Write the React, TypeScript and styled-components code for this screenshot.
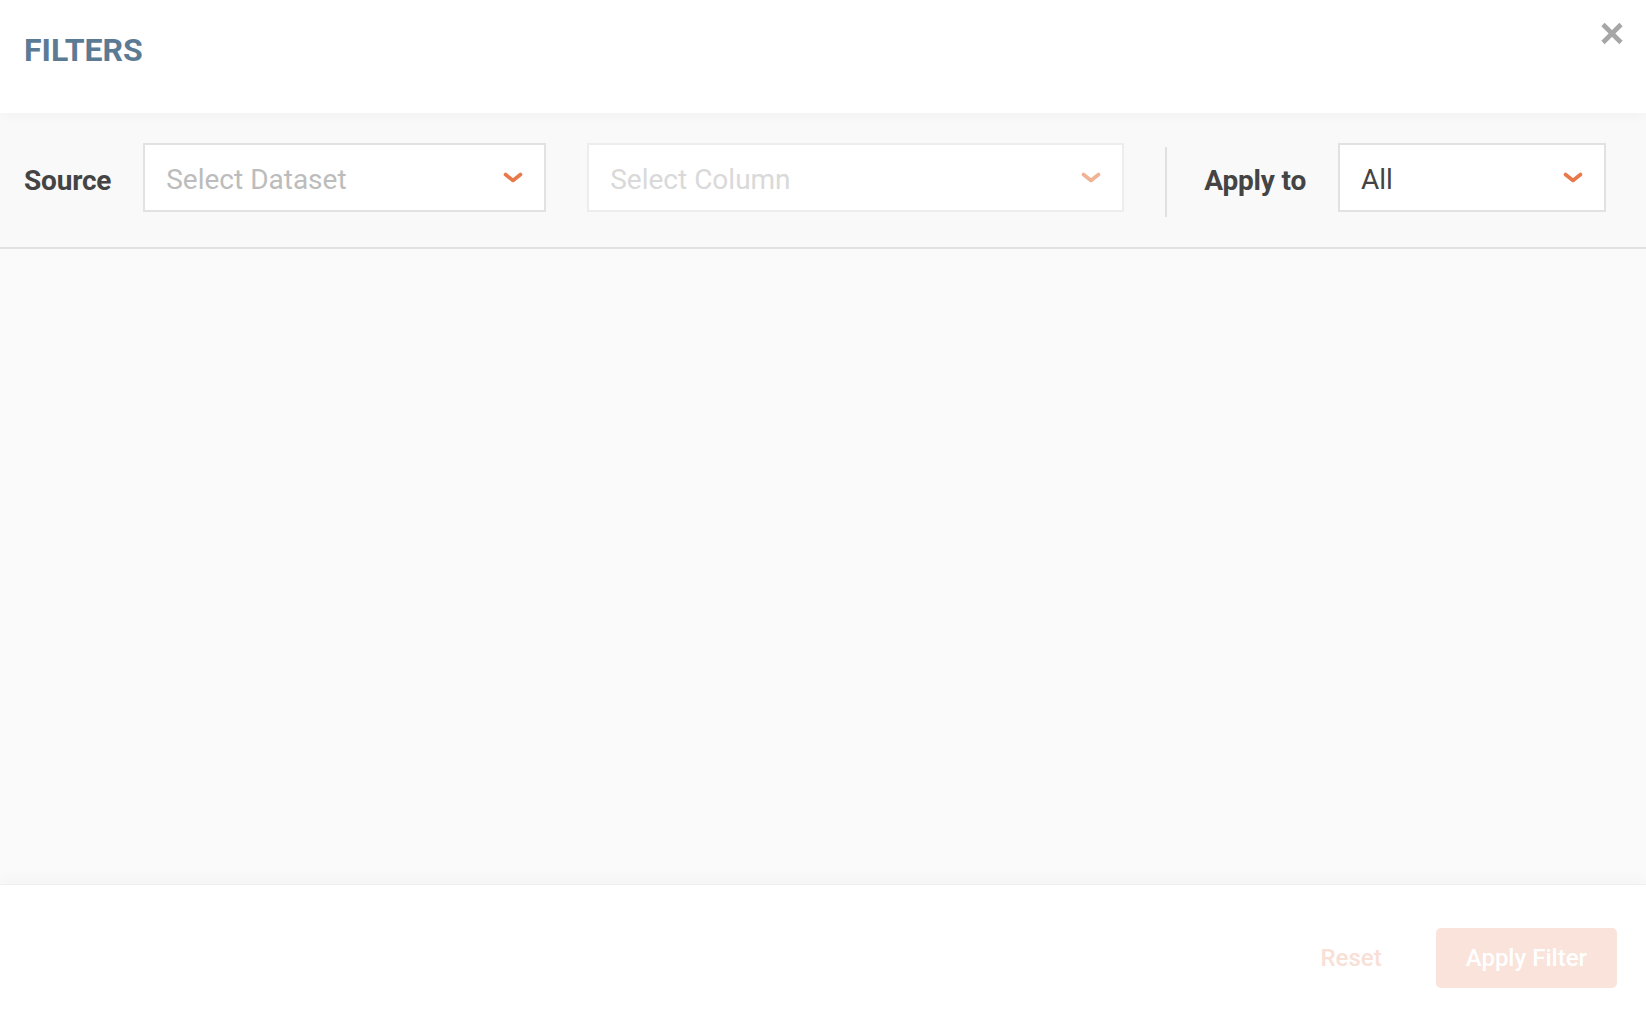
import React, { useState } from 'react';
import { createGlobalStyle, styled } from 'styled-components';

const GlobalStyle = createGlobalStyle`
  * {
    box-sizing: border-box;
  }
  html,
  body {
    margin: 0;
    padding: 0;
    height: 100%;
  }
  body {
    font-family: Roboto, 'Liberation Sans', Arial, sans-serif;
    background: #ffffff;
  }
  #root {
    height: 100%;
  }
`;

const Chevron: React.FC<{ faded?: boolean }> = ({ faded }) => (
  <ChevronSvg viewBox="0 0 20 11" $faded={faded}>
    <polyline points="2.5,2.5 10,8.5 17.5,2.5" />
  </ChevronSvg>
);

interface SelectProps {
  value?: string;
  placeholder: string;
  width?: number;
  disabled?: boolean;
}

const Select: React.FC<SelectProps> = ({ value, placeholder, width, disabled }) => (
  <SelectBox $width={width} $disabled={disabled}>
    <SelectText $empty={!value} $disabled={disabled}>
      {value || placeholder}
    </SelectText>
    <Chevron faded={disabled} />
  </SelectBox>
);

const App: React.FC = () => {
  const [dataset] = useState('');
  const [column] = useState('');
  const [applyTo] = useState('All');

  return (
    <>
      <GlobalStyle />
      <Modal>
        <Header>
          <Title>FILTERS</Title>
          <CloseButton aria-label="Close">
            <svg viewBox="0 0 24 24" width="24" height="24">
              <line x1="3" y1="2.5" x2="21" y2="20.5" />
              <line x1="21" y1="2.5" x2="3" y2="20.5" />
            </svg>
          </CloseButton>
        </Header>

        <Toolbar>
          <Label>Source</Label>
          <Select value={dataset} placeholder="Select Dataset" width={403} />
          <Select value={column} placeholder="Select Column" disabled />
          <Divider />
          <Label>Apply to</Label>
          <Select value={applyTo} placeholder="Select" width={268} />
        </Toolbar>

        <Content />

        <Footer>
          <TextButton disabled>Reset</TextButton>
          <PrimaryButton disabled>Apply Filter</PrimaryButton>
        </Footer>
      </Modal>
    </>
  );
};

export default App;

const Modal = styled.div`
  display: flex;
  flex-direction: column;
  height: 100vh;
  background: #fafafa;
`;

const Header = styled.div`
  position: relative;
  z-index: 2;
  display: flex;
  justify-content: space-between;
  align-items: flex-start;
  flex-shrink: 0;
  height: 113px;
  padding: 0 22px 0 24px;
  background: #ffffff;
  box-shadow: 0 2px 12px rgba(0, 0, 0, 0.035);
`;

const Title = styled.h1`
  margin: 31px 0 0;
  font-size: 32px;
  font-weight: 700;
  color: #5b7b95;
  letter-spacing: 0;
`;

const CloseButton = styled.button`
  margin-top: 22px;
  padding: 0;
  border: none;
  background: none;
  cursor: pointer;
  line-height: 0;

  svg line {
    stroke: #a6a6a6;
    stroke-width: 4.6;
  }
`;

const Toolbar = styled.div`
  position: relative;
  z-index: 1;
  display: flex;
  align-items: flex-start;
  flex-shrink: 0;
  height: 136px;
  padding: 30px 40px 0 24px;
  background: #f9f9f9;
  border-bottom: 2px solid #e2e2e2;
`;

const Label = styled.span`
  margin-right: 32px;
  padding-top: 3px;
  font-size: 28px;
  line-height: 69px;
  font-weight: 700;
  color: #444444;
  white-space: nowrap;
  letter-spacing: -0.2px;
`;

const SelectBox = styled.div<{ $width?: number; $disabled?: boolean }>`
  display: flex;
  align-items: center;
  justify-content: space-between;
  flex: ${({ $width }) => ($width ? `0 0 ${$width}px` : '1 1 auto')};
  height: 69px;
  margin-right: 41px;
  padding: 0 21px 0 21px;
  background: #ffffff;
  border: 2px solid ${({ $disabled }) => ($disabled ? '#ededed' : '#e2e2e2')};
  cursor: ${({ $disabled }) => ($disabled ? 'default' : 'pointer')};

  &:last-child {
    margin-right: 0;
  }
`;

const SelectText = styled.span<{ $empty?: boolean; $disabled?: boolean }>`
  padding-top: 4px;
  font-size: 28px;
  font-weight: 400;
  color: ${({ $empty, $disabled }) =>
    $disabled ? '#d9d9d9' : $empty ? '#bcbcbc' : '#444444'};
`;

const ChevronSvg = styled.svg<{ $faded?: boolean }>`
  width: 20px;
  height: 11px;
  flex-shrink: 0;

  polyline {
    fill: none;
    stroke: ${({ $faded }) => ($faded ? '#f2b394' : '#e8794a')};
    stroke-width: 3.6;
    stroke-linecap: round;
    stroke-linejoin: round;
  }
`;

const Divider = styled.div`
  flex-shrink: 0;
  width: 2px;
  height: 70px;
  margin: 4px 37px 0 0;
  background: #e0e0e0;
`;

const Content = styled.div`
  flex: 1;
  background: #fafafa;
`;

const Footer = styled.div`
  position: relative;
  display: flex;
  justify-content: flex-end;
  align-items: center;
  flex-shrink: 0;
  gap: 24px;
  height: 138px;
  padding: 8px 29px 0 0;
  background: #ffffff;
  border-top: 1px solid #efefef;
  box-shadow: 0 -6px 14px rgba(0, 0, 0, 0.025);
`;

const TextButton = styled.button`
  padding: 0 30px;
  height: 60px;
  border: none;
  background: none;
  font-family: inherit;
  font-size: 24px;
  font-weight: 500;
  color: #f9e0d7;
  cursor: default;
`;

const PrimaryButton = styled.button`
  height: 60px;
  padding: 0 30px;
  border: none;
  border-radius: 5px;
  background: #f9e3da;
  font-family: inherit;
  font-size: 24px;
  font-weight: 500;
  color: #ffffff;
  cursor: default;
`;
